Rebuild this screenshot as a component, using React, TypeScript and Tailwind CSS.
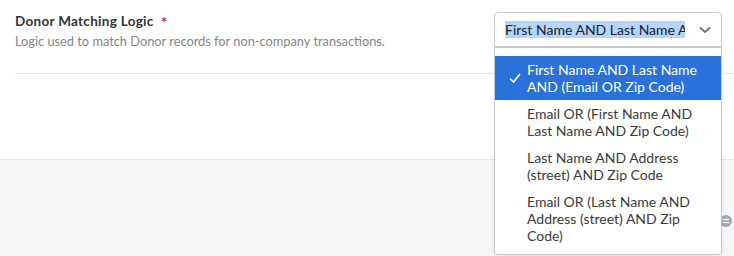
import React from "react"

const OPTIONS = [
  "First Name AND Last Name AND (Email OR Zip Code)",
  "Email OR (First Name AND Last Name AND Zip Code)",
  "Last Name AND Address (street) AND Zip Code",
  "Email OR (Last Name AND Address (street) AND Zip Code)",
]

function DonorMatchingSelect() {
  const selected = 0

  return (
    <div className="relative w-[228px] mr-[12px]">
      {/* Closed select box */}
      <div className="flex items-center h-[35px] border border-[#c8cbce] rounded-t-[4px] bg-white">
        <div className="ml-[10px] w-[180px] overflow-hidden whitespace-nowrap text-[14px] leading-[17px] text-[#222]">
          <span className="bg-[#b4d5fe]">{OPTIONS[selected]}</span>
        </div>
        <svg className="ml-[14px]" width="12" height="8" viewBox="0 0 12 8" fill="none">
          <polyline points="1,1.5 6,6 11,1.5" stroke="#6b6e72" strokeWidth="1.8" />
        </svg>
      </div>

      {/* Open listbox */}
      <div className="absolute left-0 top-[35px] w-full z-10 bg-white border border-[#c8cbce] rounded-b-[4px] pt-[8px] pb-[5px] shadow-[0_2px_4px_rgba(0,0,0,0.08)]">
        {OPTIONS.map((label, i) => (
          <div
            key={label}
            className={`relative pl-[32px] pr-[10px] py-[5px] text-[14px] leading-[17px] ${
              i === selected ? "bg-[#2a71d9] text-white" : "text-[#3b3b3b]"
            }`}
          >
            {i === selected && (
              <svg
                className="absolute left-[14px] top-1/2 -translate-y-1/2"
                width="12"
                height="10"
                viewBox="0 0 12 10"
                fill="none"
              >
                <polyline points="1,5.5 4.5,9 11,1" stroke="white" strokeWidth="1.6" />
              </svg>
            )}
            {label}
          </div>
        ))}
      </div>
    </div>
  )
}

export default function App() {
  return (
    <div className="relative w-[734px] h-[256px] overflow-hidden bg-white font-['Lato',sans-serif]">
      <div className="h-[159px] pl-[15px] pt-[12px]">
        <div className="flex items-start justify-between border-b border-[#e4e6e9] pb-[24px]">
          <div className="pt-[1px]">
            <div className="flex items-center text-[13.5px] leading-[17px] font-bold tracking-[0.3px] text-[#333]">
              Donor Matching Logic
              <span className="ml-[7px] text-[16px] leading-[16px] text-[#d9342b]">*</span>
            </div>
            <p className="mt-[3px] text-[12.8px] leading-[16px] text-[#858585]">
              Logic used to match Donor records for non-company transactions.
            </p>
          </div>
          <DonorMatchingSelect />
        </div>
      </div>

      <div className="relative h-[97px] border-t border-[#e4e6e9] bg-[#f6f7f9]">
        {/* Partly hidden help bubble behind the listbox */}
        <svg className="absolute left-[720px] top-[55px]" width="12" height="12" viewBox="0 0 12 12">
          <circle cx="6" cy="6" r="6" fill="#a6aaaf" />
          <line x1="3" y1="4.5" x2="9" y2="4.5" stroke="white" strokeWidth="1.2" />
          <line x1="3" y1="7.5" x2="9" y2="7.5" stroke="white" strokeWidth="1.2" />
        </svg>
      </div>
    </div>
  )
}
